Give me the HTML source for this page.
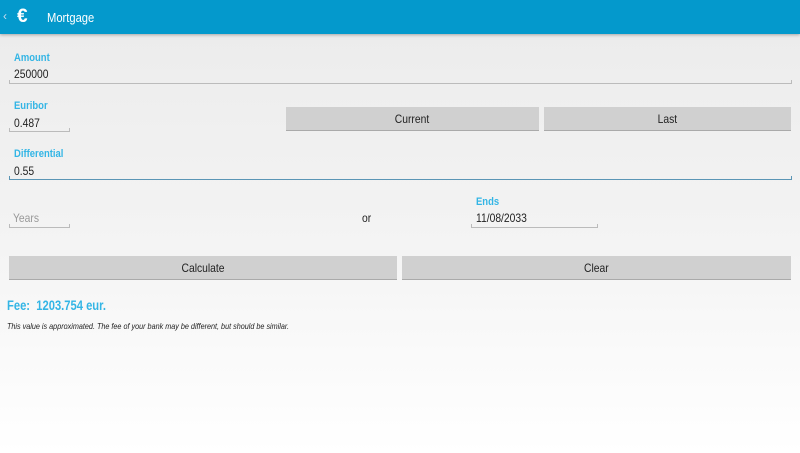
<!DOCTYPE html>
<html><head><style>
body{margin:0;width:800px;height:453px;overflow:hidden;font-family:"Liberation Sans",sans-serif;background:linear-gradient(#ebebeb 0%,#f3f3f3 50%,#fff 100%);position:relative}
.a{position:absolute}
.n{display:inline-block;transform:scaleX(.86);transform-origin:left center;white-space:nowrap}
.hdr{left:0;top:0;width:800px;height:34px;background:#0499cc;box-shadow:0 1px 3px rgba(0,0,0,.3)}
.lbl{color:#33b5e5;font-size:11px;font-weight:bold}
.val{color:#222;font-size:11px}
.line{height:3px;border:1px solid #bbb;border-top:none}
.btn{background:#d0d0d0;border-bottom:1px solid #aaa;text-align:center;font-size:12px;color:#222;line-height:25px;height:23px}
.btn .n{transform-origin:center center}
</style></head><body>
<div class="a hdr"></div>
<div class="a" style="left:3px;top:9px;color:#cde;font-size:12px">‹</div>
<div class="a" style="left:17px;top:6px;color:#fff;font-size:19px;font-weight:bold">€</div>
<div class="a" style="left:47px;top:10px;color:#fff;font-size:13px"><span class="n">Mortgage</span></div>

<div class="a lbl" style="left:14px;top:52px"><span class="n">Amount</span></div>
<div class="a val" style="left:14px;top:67px;font-size:12px"><span class="n">250000</span></div>
<div class="a line" style="left:9px;top:80px;width:781px"></div>

<div class="a lbl" style="left:14px;top:100px"><span class="n">Euribor</span></div>
<div class="a val" style="left:14px;top:116px;font-size:12px"><span class="n">0.487</span></div>
<div class="a line" style="left:9px;top:128px;width:59px"></div>
<div class="a btn" style="left:286px;top:107px;width:253px"><span class="n">Current</span></div>
<div class="a btn" style="left:544px;top:107px;width:247px"><span class="n">Last</span></div>

<div class="a lbl" style="left:14px;top:148px"><span class="n">Differential</span></div>
<div class="a val" style="left:14px;top:164px;font-size:12px"><span class="n">0.55</span></div>
<div class="a line" style="left:9px;top:176px;width:781px;border-color:#5a95b5"></div>

<div class="a val" style="left:13px;top:211px;color:#999;font-size:12px"><span class="n">Years</span></div>
<div class="a line" style="left:9px;top:224px;width:59px"></div>
<div class="a val" style="left:362px;top:211px;font-size:12px"><span class="n">or</span></div>
<div class="a lbl" style="left:476px;top:196px"><span class="n">Ends</span></div>
<div class="a val" style="left:476px;top:211px;font-size:12px"><span class="n">11/08/2033</span></div>
<div class="a line" style="left:471px;top:224px;width:125px"></div>

<div class="a btn" style="left:9px;top:256px;width:388px"><span class="n">Calculate</span></div>
<div class="a btn" style="left:402px;top:256px;width:389px"><span class="n">Clear</span></div>

<div class="a" style="left:7px;top:297px;color:#33b5e5;font-size:14px;font-weight:bold"><span class="n" style="transform:scaleX(.8)">Fee:&nbsp; 1203.754 eur.</span></div>
<div class="a" style="left:7px;top:321px;color:#222;font-size:8.5px;font-style:italic"><span class="n" style="transform:scaleX(.85)">This value is approximated. The fee of your bank may be different, but should be similar.</span></div>
</body></html>
